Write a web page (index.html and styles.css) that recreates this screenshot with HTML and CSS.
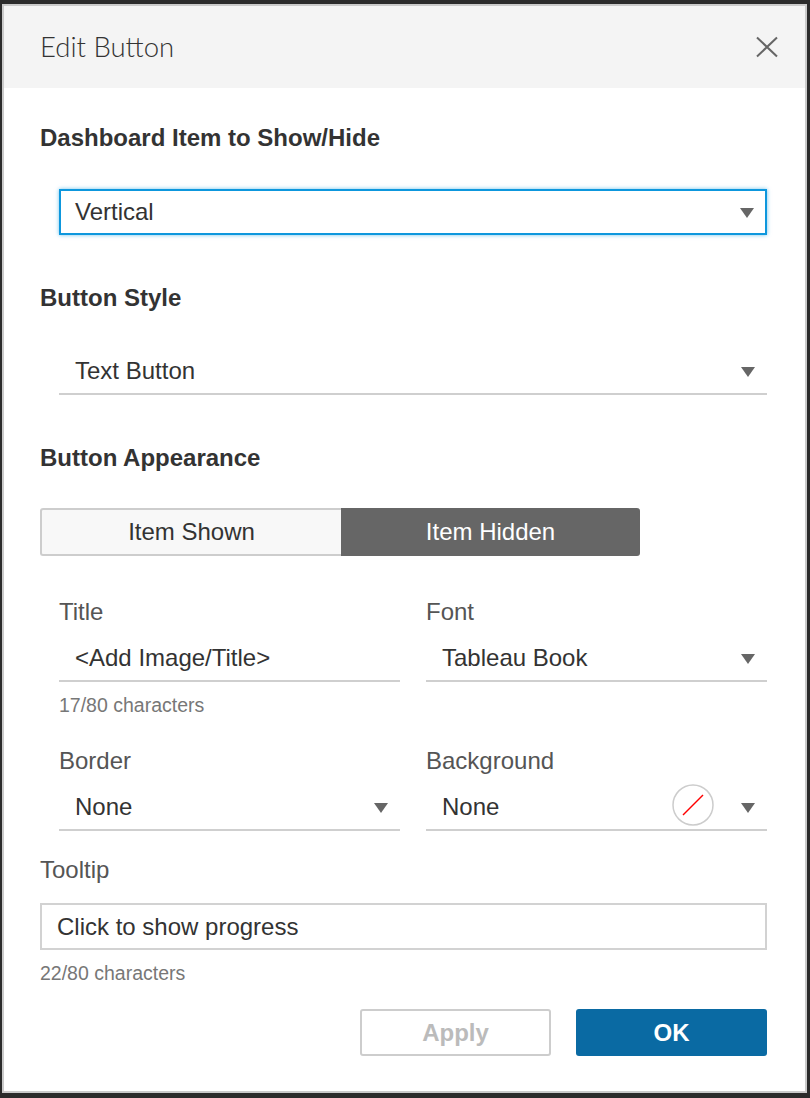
FILE: index.html
```html
<!DOCTYPE html>
<html lang="en">
<head>
  <meta charset="UTF-8">
  <meta name="viewport" content="width=device-width, initial-scale=1.0">
  <title>Edit Button</title>
  <link rel="stylesheet" href="styles.css">
</head>
<body>
  <div class="dialog">
    <div class="dialog-header">
      <h1>Edit Button</h1>
      <button class="close" aria-label="Close">
        <svg width="22" height="22" viewBox="0 0 22 22"><path d="M1 1.5 L21 20.5 M21 1.5 L1 20.5" stroke="#666" stroke-width="2" fill="none"/></svg>
      </button>
    </div>

    <div class="dialog-body">
      <h3 class="heading first">Dashboard Item to Show/Hide</h3>
      <div class="dropdown focused indent">
        <span>Vertical</span>
        <span class="arrow"></span>
      </div>

      <h3 class="heading">Button Style</h3>
      <div class="dropdown line indent">
        <span>Text Button</span>
        <span class="arrow"></span>
      </div>

      <h3 class="heading">Button Appearance</h3>
      <div class="segmented">
        <div class="seg">Item Shown</div>
        <div class="seg active">Item Hidden</div>
      </div>

      <div class="fields">
        <div class="field">
          <label>Title</label>
          <div class="dropdown line"><span>&lt;Add Image/Title&gt;</span></div>
          <div class="counter">17/80 characters</div>
        </div>
        <div class="field">
          <label>Font</label>
          <div class="dropdown line">
            <span>Tableau Book</span>
            <span class="arrow"></span>
          </div>
        </div>
        <div class="field second-row">
          <label>Border</label>
          <div class="dropdown line">
            <span>None</span>
            <span class="arrow"></span>
          </div>
        </div>
        <div class="field second-row">
          <label>Background</label>
          <div class="dropdown line">
            <span>None</span>
            <span class="swatch">
              <svg width="42" height="42" viewBox="0 0 42 42">
                <circle cx="21" cy="21" r="20" fill="#fff" stroke="#ccc" stroke-width="1.5"/>
                <path d="M11 31 L31 11" stroke="#f00" stroke-width="1.5"/>
              </svg>
            </span>
            <span class="arrow"></span>
          </div>
        </div>
      </div>

      <label class="tooltip-label">Tooltip</label>
      <div class="textbox">Click to show progress</div>
      <div class="counter">22/80 characters</div>

      <div class="actions">
        <button class="btn apply">Apply</button>
        <button class="btn ok">OK</button>
      </div>
    </div>
  </div>
</body>
</html>
```

FILE: styles.css
```css
* { box-sizing: border-box; }
body { margin: 0; padding: 4px 3px 5px 2px; background: #2b2b2b; font-family: "Liberation Sans", Arial, sans-serif; color: #333; }
.dialog { height: 1089px; background: #fff; border: 2px solid #cacaca; }
.dialog-header { height: 82px; background: #f4f4f4; display: flex; align-items: center; justify-content: space-between; padding: 0 23px 0 36px; }
.dialog-header h1 { margin: 0; font-family: Lato, "Open Sans", sans-serif; font-weight: 300; font-size: 27.5px; color: #333; padding-bottom: 2px; }
.close { background: none; border: none; padding: 0; width: 30px; height: 30px; display: flex; align-items: center; justify-content: center; }
.dialog-body { padding: 0 38px 0 36px; }
.heading { margin: 51px 0 0; font-size: 24px; line-height: 24px; font-weight: bold; color: #333; }
.heading.first { margin-top: 38px; }
.indent { margin-left: 19px; }
.dropdown { height: 46px; display: flex; align-items: center; padding: 0 12px 0 16px; font-size: 24px; color: #333; margin-top: 39px; }
.dropdown span:first-child { flex: 1; }
.dropdown.focused { border: 2px solid #0d97dd; box-shadow: 0 0 4px rgba(13,151,221,0.6); padding-left: 14px; padding-right: 11px; }
.dropdown.line { border-bottom: 2px solid #cfcfcf; }
.arrow { width: 0; height: 0; border-left: 7px solid transparent; border-right: 7px solid transparent; border-top: 10px solid #666; margin-top: 2px; }
.segmented { display: flex; width: 600px; height: 48px; margin-top: 38px; }
.seg { flex: 1; display: flex; align-items: center; justify-content: center; font-size: 24px; background: #f8f8f8; border: 2px solid #cdcdcd; border-right: none; border-radius: 3px 0 0 3px; color: #333; }
.seg.active { background: #666; color: #fff; border: none; border-radius: 0 3px 3px 0; }
.fields { display: grid; grid-template-columns: 1fr 1fr; column-gap: 26px; margin: 44px 0 0 19px; align-items: start; }
.field label { display: block; font-size: 24px; line-height: 24px; color: #555; }
.field .dropdown { margin-top: 12px; }
.field.second-row { margin-top: 34px; }
.counter { font-size: 19.5px; line-height: 20px; color: #777; margin-top: 13px; }
.swatch { display: flex; margin-right: 27px; margin-top: -4px; }
.tooltip-label { display: block; font-size: 24px; line-height: 24px; color: #555; margin-top: 27px; }
.textbox { height: 47px; margin-top: 21px; border: 2px solid #d2d2d2; display: flex; align-items: center; padding-left: 15px; font-size: 24px; color: #333; }
.actions { display: flex; justify-content: flex-end; gap: 25px; margin-top: 26px; }
.btn { width: 191px; height: 47px; font-family: "Liberation Sans", Arial, sans-serif; font-size: 24px; font-weight: bold; border-radius: 3px; }
.btn.apply { background: #fff; border: 2px solid #cdcdcd; color: #bbb; }
.btn.ok { background: #0a6aa3; border: none; color: #fff; }
```
